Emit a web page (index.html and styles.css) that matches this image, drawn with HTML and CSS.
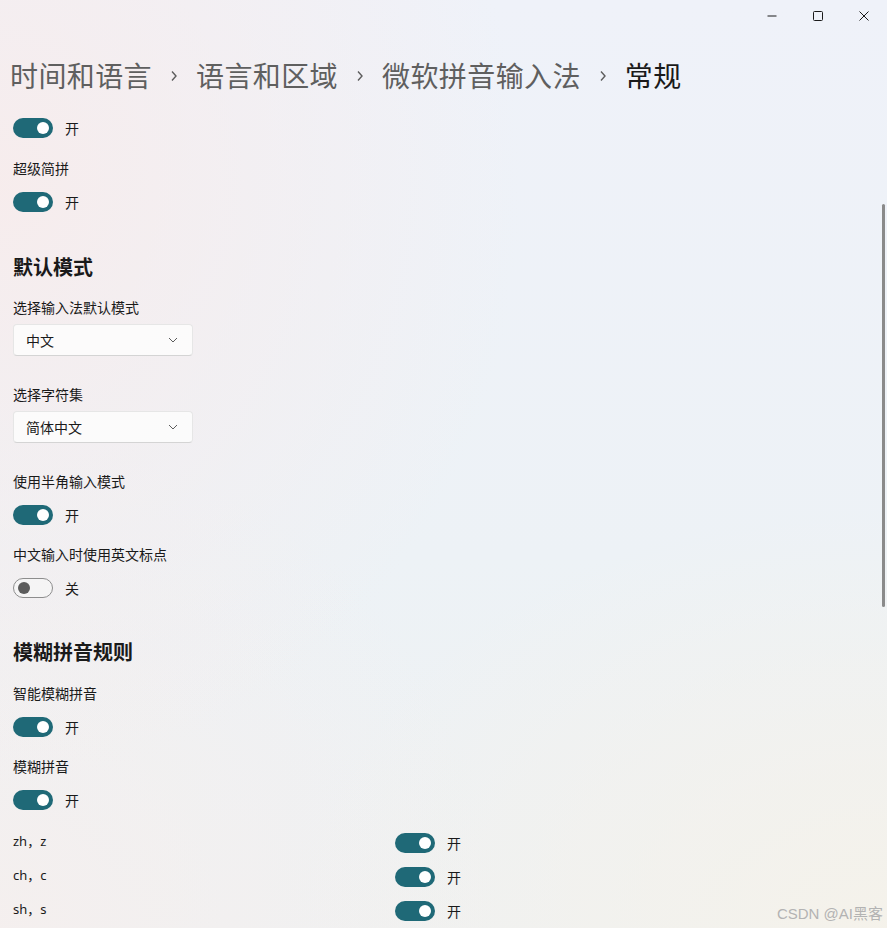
FILE: index.html
```html
<!DOCTYPE html>
<html lang="zh-CN">
<head>
<meta charset="utf-8">
<title>常规</title>
<link rel="stylesheet" href="styles.css">
</head>
<body>
<div class="window">
  <div class="titlebar">
    <div class="tb-btn"><svg width="10" height="10" viewBox="0 0 10 10"><path d="M0.5 5h9" stroke="#1a1a1a" stroke-width="1"/></svg></div>
    <div class="tb-btn"><svg width="10" height="10" viewBox="0 0 10 10"><rect x="0.5" y="0.5" width="9" height="9" rx="1" fill="none" stroke="#1a1a1a" stroke-width="1"/></svg></div>
    <div class="tb-btn"><svg width="10" height="10" viewBox="0 0 10 10"><path d="M0.5 0.5l9 9M9.5 0.5l-9 9" stroke="#1a1a1a" stroke-width="1"/></svg></div>
  </div>

  <div class="breadcrumb">
    <span class="crumb">时间和语言</span>
    <span class="sep"><svg width="8" height="12" viewBox="0 0 8 12"><path d="M2 1.5l4 4.5-4 4.5" fill="none" stroke="#5c5c5c" stroke-width="1.4"/></svg></span>
    <span class="crumb">语言和区域</span>
    <span class="sep"><svg width="8" height="12" viewBox="0 0 8 12"><path d="M2 1.5l4 4.5-4 4.5" fill="none" stroke="#5c5c5c" stroke-width="1.4"/></svg></span>
    <span class="crumb">微软拼音输入法</span>
    <span class="sep"><svg width="8" height="12" viewBox="0 0 8 12"><path d="M2 1.5l4 4.5-4 4.5" fill="none" stroke="#5c5c5c" stroke-width="1.4"/></svg></span>
    <span class="crumb current">常规</span>
  </div>

  <div class="content">
    <div class="toggle-row first"><span class="toggle on"></span><span class="state">开</span></div>

    <div class="label g1">超级简拼</div>
    <div class="toggle-row"><span class="toggle on"></span><span class="state">开</span></div>

    <h2 class="heading h-first">默认模式</h2>
    <div class="label">选择输入法默认模式</div>
    <div class="select"><span>中文</span><svg width="10" height="6" viewBox="0 0 10 6"><path d="M1 1l4 4 4-4" fill="none" stroke="#5c5c5c" stroke-width="1"/></svg></div>

    <div class="label after-select">选择字符集</div>
    <div class="select"><span>简体中文</span><svg width="10" height="6" viewBox="0 0 10 6"><path d="M1 1l4 4 4-4" fill="none" stroke="#5c5c5c" stroke-width="1"/></svg></div>

    <div class="label after-select2">使用半角输入模式</div>
    <div class="toggle-row"><span class="toggle on"></span><span class="state">开</span></div>

    <div class="label g">中文输入时使用英文标点</div>
    <div class="toggle-row"><span class="toggle off"></span><span class="state">关</span></div>

    <h2 class="heading">模糊拼音规则</h2>
    <div class="label after-h2">智能模糊拼音</div>
    <div class="toggle-row"><span class="toggle on"></span><span class="state">开</span></div>

    <div class="label g">模糊拼音</div>
    <div class="toggle-row"><span class="toggle on"></span><span class="state">开</span></div>

    <div class="fuzzy">
      <div class="fz-row"><span class="fz-label">zh，z</span><span class="fz-toggle"><span class="toggle on"></span><span class="state">开</span></span></div>
      <div class="fz-row"><span class="fz-label">ch，c</span><span class="fz-toggle"><span class="toggle on"></span><span class="state">开</span></span></div>
      <div class="fz-row"><span class="fz-label">sh，s</span><span class="fz-toggle"><span class="toggle on"></span><span class="state">开</span></span></div>
    </div>
  </div>

  <div class="scrollbar"></div>
  <div class="watermark">CSDN @AI黑客</div>
</div>
</body>
</html>
```
FILE: styles.css
```css
* { box-sizing: border-box; }
html, body {
  margin: 0;
  padding: 0;
  width: 887px;
  height: 928px;
  overflow: hidden;
}
body {
  font-family: "Noto Sans", "Noto Sans CJK SC", sans-serif;
  color: #1a1a1a;
  background:
    radial-gradient(ellipse 520px 600px at 0% 20%, rgba(247, 236, 236, 0.95) 0%, rgba(247, 236, 236, 0) 100%),
    radial-gradient(ellipse 600px 420px at 100% 100%, rgba(245, 242, 234, 0.95) 0%, rgba(245, 242, 234, 0) 100%),
    radial-gradient(ellipse 500px 500px at 0% 100%, rgba(245, 239, 238, 0.9) 0%, rgba(245, 239, 238, 0) 100%),
    linear-gradient(180deg, #eff2f9 0%, #edf2f6 60%, #eff1f2 100%);
}
.window {
  position: relative;
  width: 887px;
  height: 928px;
}
.titlebar {
  height: 32px;
  display: flex;
  justify-content: flex-end;
}
.tb-btn {
  width: 46px;
  height: 32px;
  display: flex;
  align-items: center;
  justify-content: center;
}
.breadcrumb {
  margin-top: 23px;
  padding-left: 10px;
  height: 40px;
  display: flex;
  align-items: center;
  font-family: "Noto Sans CJK SC", sans-serif;
  font-size: 28px;
  line-height: 40px;
  color: #5f5f5f;
}
.crumb { letter-spacing: 0.4px; }
.crumb.current { color: #1a1a1a; }
.sep {
  width: 44px;
  display: flex;
  justify-content: center;
  align-items: center;
  padding-top: 2px;
}
.content {
  padding-left: 13px;
  font-family: "Noto Sans CJK SC", sans-serif;
  font-size: 14px;
}
.toggle-row {
  display: flex;
  align-items: center;
  height: 20px;
  margin-top: 14px;
}
.toggle-row.first { margin-top: 23px; }
.toggle {
  position: relative;
  display: inline-block;
  width: 40px;
  height: 20px;
  border-radius: 10px;
  flex: none;
}
.toggle.on { background: #1f6977; }
.toggle.on::after {
  content: "";
  position: absolute;
  right: 4px;
  top: 4px;
  width: 12px;
  height: 12px;
  border-radius: 50%;
  background: #ffffff;
}
.toggle.off {
  background: rgba(246, 246, 246, 0.7);
  border: 1px solid #8d8d8d;
}
.toggle.off::after {
  content: "";
  position: absolute;
  left: 4px;
  top: 3px;
  width: 12px;
  height: 12px;
  border-radius: 50%;
  background: #5c5c5c;
}
.state {
  margin-left: 12px;
  line-height: 20px;
  color: #1a1a1a;
}
.label {
  line-height: 20px;
  height: 20px;
  margin-top: 16px;
}
.label.g1 { margin-top: 20px; }
.label.g { margin-top: 19px; }
.label.after-h2 { margin-top: 17px; }
.label.after-select { margin-top: 28px; }
.label.after-select2 { margin-top: 28px; }
.heading {
  margin: 40px 0 0;
  font-size: 20px;
  font-weight: 600;
  line-height: 28px;
  height: 28px;
}
.heading.h-first { margin-top: 41px; }
.select {
  margin-top: 7px;
  width: 180px;
  height: 32px;
  border: 1px solid #e6e6e6;
  border-bottom-color: #d4d4d4;
  border-radius: 4px;
  background: rgba(253, 253, 253, 0.85);
  display: flex;
  align-items: center;
  justify-content: space-between;
  padding: 0 14px 0 12px;
}
.fuzzy { margin-top: 21px; }
.fz-row {
  display: flex;
  height: 34px;
}
.fz-label {
  width: 382px;
  line-height: 20px;
  font-family: "Noto Sans", "Noto Sans CJK SC", sans-serif;
  font-size: 13px;
}
.fz-toggle {
  display: flex;
  align-items: center;
  height: 20px;
  margin-top: 2px;
}
.scrollbar {
  position: absolute;
  left: 882px;
  top: 204px;
  width: 3px;
  height: 403px;
  border-radius: 2px;
  background: #8a8a8a;
}
.watermark {
  position: absolute;
  right: 4px;
  bottom: 5px;
  font-family: "Liberation Sans", "Noto Sans CJK SC", sans-serif;
  font-size: 15px;
  color: #b3b3b3;
}
```
